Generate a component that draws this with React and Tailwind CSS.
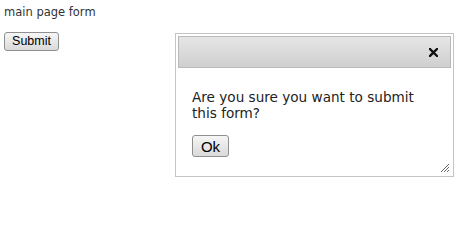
import React from 'react';

const btn =
  "border border-[#8f8f8f] rounded-[3px] bg-gradient-to-b from-[#f6f6f6] to-[#dadada] leading-none text-black font-['Liberation_Sans',Arial,sans-serif]";

export default function App() {
  return (
    <div className="w-[474px] h-[204px] bg-white relative font-['DejaVu_Sans',Verdana,sans-serif] text-[#333]">
      <div className="pl-[4px] pt-[5px] text-[11.5px] leading-[14px]">main page form</div>
      <div className="flex pl-[4px] pt-[13px]">
        <button className={`${btn} w-[55px] h-[19px] text-[12.5px]`}>Submit</button>
      </div>

      {/* Dialog */}
      <div className="absolute left-[175px] top-[33px] w-[279px] h-[144px] border border-[#c4c4c4] bg-white p-[2px]">
        <div className="h-[32px] border border-[#b9b9b9] bg-gradient-to-b from-[#e6e6e6] to-[#cfcfcf] flex items-center justify-end pr-[12px]">
          <svg width="9" height="9" viewBox="0 0 9 9">
            <path d="M1 1 L8 8 M8 1 L1 8" stroke="#111" strokeWidth="2.4" strokeLinecap="square" />
          </svg>
        </div>
        <div className="pl-[14px] pt-[21px] text-[13.6px] leading-[16px] text-[#222]">
          Are you sure you want to submit
          <br />
          this form?
        </div>
        <div className="flex pl-[14px] pt-[14px]">
          <button className={`${btn} w-[37px] h-[22px] text-[15px]`}>Ok</button>
        </div>
        <svg className="absolute right-[3px] bottom-[3px]" width="10" height="10" viewBox="0 0 10 10">
          <path d="M9 1 L1 9 M9 4 L4 9 M9 7 L7 9" stroke="#666" strokeWidth="1" />
        </svg>
      </div>
    </div>
  );
}
